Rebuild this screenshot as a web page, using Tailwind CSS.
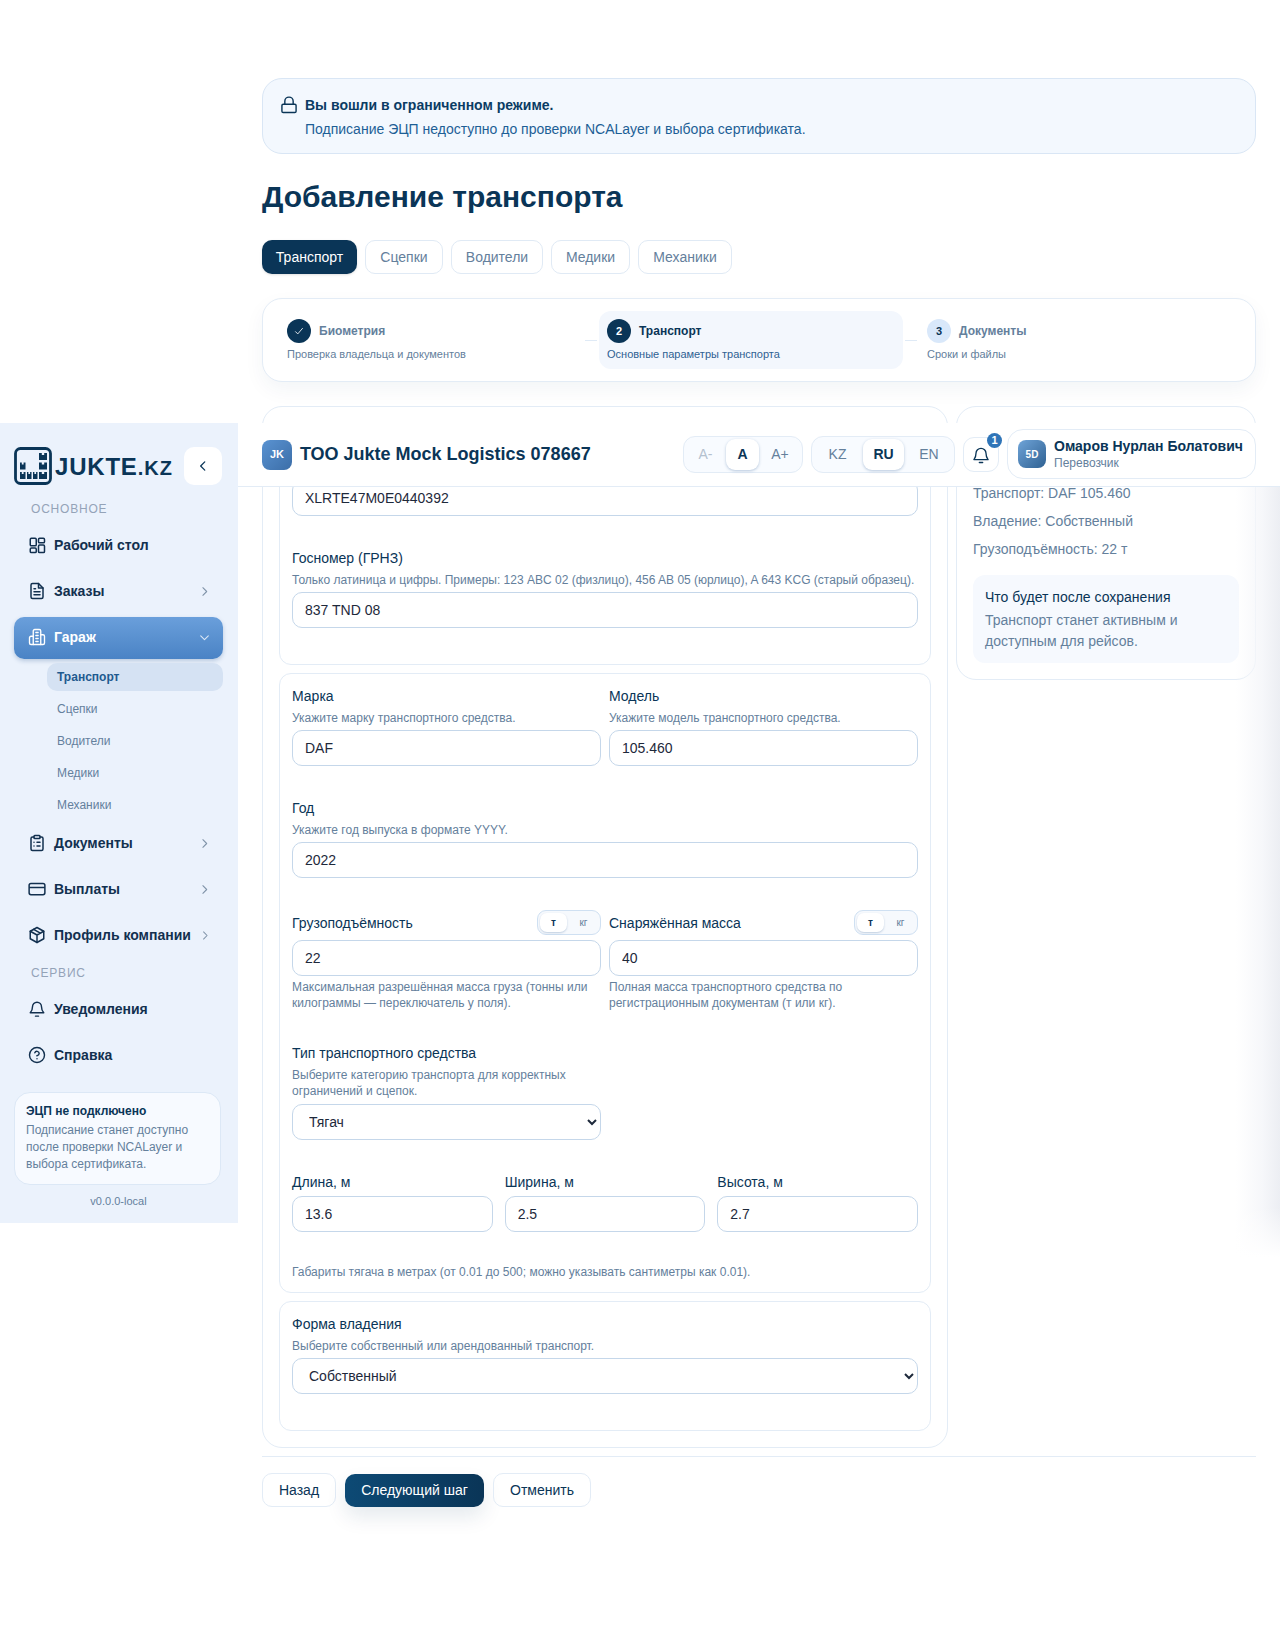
<!DOCTYPE html>
<html lang="ru">
  <head>
    <meta charset="UTF-8" />
    <title>Добавление транспорта</title>
    <script src="https://cdn.jsdelivr.net/npm/@tailwindcss/browser@4"></script>
  </head>
  <body class="relative h-[1627px] overflow-hidden bg-white font-['Liberation_Sans',Arial,sans-serif] text-[14px] text-[#0a3557]">
    <!-- page content -->
    <main class="pl-[262px] pr-[24px] pt-[78px]">
      <div class="flex h-[76px] gap-[6px] rounded-[20px] border border-[#d9e6f5] bg-[#f3f8fe] pl-[16px] pt-[14px]">
        <svg class="mt-[2px] h-[20px] w-[20px] text-[#0a3557]" viewBox="0 0 24 24" fill="none" stroke="currentColor" stroke-width="1.700" stroke-linecap="round" stroke-linejoin="round"><path d="M7 11V7.500a5 5 0 0 1 10 0V11"/><rect x="3.500" y="11" width="17" height="10" rx="1.500"/></svg>
        <div>
          <div class="h-[24px] font-bold leading-[24px] text-[#0b3c64]">Вы вошли в ограниченном режиме.</div>
          <div class="h-[24px] leading-[24px] text-[#1d5f96]">Подписание ЭЦП недоступно до проверки NCALayer и выбора сертификата.</div>
        </div>
      </div>

      <h1 class="mt-[24px] h-[38px] text-[30px] font-bold leading-[38px] text-[#0a3557]">Добавление транспорта</h1>

      <div class="mt-[24px] flex gap-[8px]">
        <button class="h-[34px] w-[95px] rounded-[10px] bg-[#0a3557] text-white shadow-sm">Транспорт</button>
        <button class="h-[34px] w-[78px] rounded-[10px] border border-[#e0eaf5] text-[#64809c]">Сцепки</button>
        <button class="h-[34px] w-[92px] rounded-[10px] border border-[#e0eaf5] text-[#64809c]">Водители</button>
        <button class="h-[34px] w-[79px] rounded-[10px] border border-[#e0eaf5] text-[#64809c]">Медики</button>
        <button class="h-[34px] w-[94px] rounded-[10px] border border-[#e0eaf5] text-[#64809c]">Механики</button>
      </div>

      <div class="mt-[24px] flex h-[84px] rounded-[20px] border border-[#e3ecf6] bg-white px-[16px] py-[12px] shadow-[0_8px_20px_rgba(15,50,90,0.05)]">
        <div class="w-[304px] p-[8px]">
          <div class="flex h-[24px] items-center gap-[8px]">
            <span class="flex h-[24px] w-[24px] items-center justify-center rounded-full bg-[#0a3557]">
              <svg class="h-[10px] w-[10px]" viewBox="0 0 12 12" fill="none" stroke="white" stroke-width="1"><path d="M1.500 6.500 4.500 9.500 10.500 2.500"/></svg>
            </span>
            <span class="text-[12px] font-bold text-[#64809c]">Биометрия</span>
          </div>
          <div class="mt-[3px] text-[11px] leading-[16px] text-[#64809c]">Проверка владельца и документов</div>
        </div>
        <div class="flex w-[16px] items-center"><div class="mx-[2px] h-px w-[12px] bg-[#dfeaf6]"></div></div>
        <div class="w-[304px] rounded-[12px] bg-[#f3f7fd] p-[8px]">
          <div class="flex h-[24px] items-center gap-[8px]">
            <span class="flex h-[24px] w-[24px] items-center justify-center rounded-full bg-[#0a3557] text-[11px] font-bold text-white">2</span>
            <span class="text-[12px] font-bold text-[#0a3557]">Транспорт</span>
          </div>
          <div class="mt-[3px] text-[11px] leading-[16px] text-[#2f6192]">Основные параметры транспорта</div>
        </div>
        <div class="flex w-[16px] items-center"><div class="mx-[2px] h-px w-[12px] bg-[#dfeaf6]"></div></div>
        <div class="flex-1 p-[8px]">
          <div class="flex h-[24px] items-center gap-[8px]">
            <span class="flex h-[24px] w-[24px] items-center justify-center rounded-full bg-[#d9e8fa] text-[11px] font-bold text-[#0a3557]">3</span>
            <span class="text-[12px] font-bold text-[#64809c]">Документы</span>
          </div>
          <div class="mt-[3px] text-[11px] leading-[16px] text-[#64809c]">Сроки и файлы</div>
        </div>
      </div>

      <div class="mt-[24px] flex gap-[8px]">
        <!-- form card -->
        <div class="h-[1042px] w-[686px] rounded-[20px] border border-[#e3ecf6] px-[16px] pt-[16px]">
          <section class="h-[242px] rounded-[12px] border border-[#e3ecf6] px-[12px] pt-[56px]">
            <input class="h-[36px] w-full rounded-[10px] border border-[#c5d7ea] bg-white pl-[12px] text-[14px] text-[#1e293b]" value="XLRTE47M0E0440392" />
            <div class="mt-[32px] h-[20px] leading-[20px] text-[#0a3557]">Госномер (ГРНЗ)</div>
            <div class="mt-[4px] h-[16px] whitespace-nowrap text-[12px] leading-[16px] text-[#64809c]">Только латиница и цифры. Примеры: 123 ABC 02 (физлицо), 456 AB 05 (юрлицо), A 643 KCG (старый образец).</div>
            <input class="mt-[4px] h-[36px] w-full rounded-[10px] border border-[#c5d7ea] bg-white pl-[12px] text-[14px] text-[#1e293b]" value="837 TND 08" />
          </section>

          <section class="mt-[8px] h-[620px] rounded-[12px] border border-[#e3ecf6] px-[12px] pt-[12px]">
            <div class="grid grid-cols-2 gap-[8px]">
              <div>
                <div class="h-[20px] leading-[20px]">Марка</div>
                <div class="mt-[4px] h-[16px] text-[12px] leading-[16px] text-[#64809c]">Укажите марку транспортного средства.</div>
                <input class="mt-[4px] h-[36px] w-full rounded-[10px] border border-[#c5d7ea] bg-white pl-[12px] text-[14px] text-[#1e293b]" value="DAF" />
              </div>
              <div>
                <div class="h-[20px] leading-[20px]">Модель</div>
                <div class="mt-[4px] h-[16px] text-[12px] leading-[16px] text-[#64809c]">Укажите модель транспортного средства.</div>
                <input class="mt-[4px] h-[36px] w-full rounded-[10px] border border-[#c5d7ea] bg-white pl-[12px] text-[14px] text-[#1e293b]" value="105.460" />
              </div>
            </div>

            <div class="mt-[32px] h-[20px] leading-[20px]">Год</div>
            <div class="mt-[4px] h-[16px] text-[12px] leading-[16px] text-[#64809c]">Укажите год выпуска в формате YYYY.</div>
            <input class="mt-[4px] h-[36px] w-full rounded-[10px] border border-[#c5d7ea] bg-white pl-[12px] text-[14px] text-[#1e293b]" value="2022" />

            <div class="mt-[32px] grid grid-cols-2 gap-[8px]">
              <div>
                <div class="flex h-[25px] items-center justify-between">
                  <span class="pt-[1px]">Грузоподъёмность</span>
                  <span class="flex h-[25px] w-[64px] rounded-[9px] border border-[#cfe0f2] bg-[#f6f9fd] p-[2px] text-[10px] text-[#64809c]">
                    <span class="flex w-[27px] items-center justify-center rounded-[7px] bg-white font-bold text-[#0a3557] shadow-[0_1px_2px_rgba(30,80,140,0.25)]">т</span>
                    <span class="flex flex-1 items-center justify-center pl-[2px]">кг</span>
                  </span>
                </div>
                <input class="mt-[5px] h-[36px] w-full rounded-[10px] border border-[#c5d7ea] bg-white pl-[12px] text-[14px] text-[#1e293b]" value="22" />
                <div class="mt-[3px] text-[12px] leading-[16px] text-[#64809c]">Максимальная разрешённая масса груза (тонны или килограммы — переключатель у поля).</div>
              </div>
              <div>
                <div class="flex h-[25px] items-center justify-between">
                  <span class="pt-[1px]">Снаряжённая масса</span>
                  <span class="flex h-[25px] w-[64px] rounded-[9px] border border-[#cfe0f2] bg-[#f6f9fd] p-[2px] text-[10px] text-[#64809c]">
                    <span class="flex w-[27px] items-center justify-center rounded-[7px] bg-white font-bold text-[#0a3557] shadow-[0_1px_2px_rgba(30,80,140,0.25)]">т</span>
                    <span class="flex flex-1 items-center justify-center pl-[2px]">кг</span>
                  </span>
                </div>
                <input class="mt-[5px] h-[36px] w-full rounded-[10px] border border-[#c5d7ea] bg-white pl-[12px] text-[14px] text-[#1e293b]" value="40" />
                <div class="mt-[3px] text-[12px] leading-[16px] text-[#64809c]">Полная масса транспортного средства по регистрационным документам (т или кг).</div>
              </div>
            </div>

            <div class="mt-[32px] w-[309px]">
              <div class="h-[20px] leading-[20px]">Тип транспортного средства</div>
              <div class="mt-[4px] text-[12px] leading-[16px] text-[#64809c]">Выберите категорию транспорта для корректных ограничений и сцепок.</div>
              <select class="mt-[5px] h-[36px] w-full rounded-[10px] border border-[#c5d7ea] bg-white pl-[12px] text-[14px] text-[#1e293b]"><option>Тягач</option></select>
            </div>

            <div class="mt-[32px] grid grid-cols-3 gap-[12px]">
              <div>
                <div class="h-[20px] leading-[20px]">Длина, м</div>
                <input class="mt-[4px] h-[36px] w-full rounded-[10px] border border-[#c5d7ea] bg-white pl-[12px] text-[14px] text-[#1e293b]" value="13.6" />
              </div>
              <div>
                <div class="h-[20px] leading-[20px]">Ширина, м</div>
                <input class="mt-[4px] h-[36px] w-full rounded-[10px] border border-[#c5d7ea] bg-white pl-[12px] text-[14px] text-[#1e293b]" value="2.5" />
              </div>
              <div>
                <div class="h-[20px] leading-[20px]">Высота, м</div>
                <input class="mt-[4px] h-[36px] w-full rounded-[10px] border border-[#c5d7ea] bg-white pl-[12px] text-[14px] text-[#1e293b]" value="2.7" />
              </div>
            </div>
            <div class="mt-[32px] h-[16px] text-[12px] leading-[16px] text-[#64809c]">Габариты тягача в метрах (от 0.01 до 500; можно указывать сантиметры как 0.01).</div>
          </section>

          <section class="mt-[8px] h-[130px] rounded-[12px] border border-[#e3ecf6] px-[12px] pt-[12px]">
            <div class="h-[20px] leading-[20px]">Форма владения</div>
            <div class="mt-[4px] h-[16px] text-[12px] leading-[16px] text-[#64809c]">Выберите собственный или арендованный транспорт.</div>
            <select class="mt-[4px] h-[36px] w-full rounded-[10px] border border-[#c5d7ea] bg-white pl-[12px] text-[14px] text-[#1e293b]"><option>Собственный</option></select>
          </section>
        </div>

        <!-- summary card -->
        <div class="h-[274px] flex-1 rounded-[20px] border border-[#e3ecf6] px-[16px] pt-[72px]">
          <div class="h-[28px] leading-[28px] text-[#64809c]">Транспорт: DAF 105.460</div>
          <div class="h-[28px] leading-[28px] text-[#64809c]">Владение: Собственный</div>
          <div class="h-[28px] leading-[28px] text-[#64809c]">Грузоподъёмность: 22 т</div>
          <div class="mt-[12px] h-[88px] rounded-[12px] bg-[#f6f9fe] px-[12px] pt-[12px]">
            <div class="h-[20px] leading-[20px] text-[#0a3557]">Что будет после сохранения</div>
            <div class="mt-[3px] leading-[21px] text-[#64809c]">Транспорт станет активным и доступным для рейсов.</div>
          </div>
        </div>
      </div>

      <div class="mt-[8px] border-t border-[#e3ecf6] pt-[16px]">
        <div class="flex items-center gap-[9px]">
          <button class="h-[34px] w-[74px] rounded-[10px] border border-[#e3ecf6] text-[#0a3557]">Назад</button>
          <button class="h-[33px] w-[139px] rounded-[10px] bg-gradient-to-r from-[#0d4a75] to-[#0a3557] text-white shadow-[0_10px_20px_rgba(10,53,87,0.1)]">Следующий шаг</button>
          <button class="h-[34px] w-[98px] rounded-[10px] border border-[#e3ecf6] text-[#0a3557]">Отменить</button>
        </div>
      </div>
    </main>

    <!-- soft shade along the right edge -->
    <div class="absolute right-0 top-[487px] h-[770px] w-[44px] bg-gradient-to-l from-[#eceef3] via-[#f6f7fa] via-40% to-white/0">
      <div class="absolute bottom-0 left-0 h-[50px] w-full bg-gradient-to-b from-white/0 to-white"></div>
    </div>

    <!-- sticky header, photographed mid-scroll -->
    <header class="absolute left-[238px] right-0 top-[423px] flex h-[64px] items-center justify-between border-b border-[#e3ecf6] bg-white pl-[24px] pr-[24px]">
      <div class="flex items-center gap-[8px]">
        <span class="flex h-[30px] w-[30px] items-center justify-center rounded-[8px] bg-gradient-to-br from-[#5a93d2] to-[#3c6ea8] text-[11px] font-bold text-white">JK</span>
        <span class="text-[18px] font-bold text-[#0a3557]">ТОО Jukte Mock Logistics 078667</span>
      </div>
      <div class="flex items-center gap-[8px]">
        <div class="flex h-[37px] w-[120px] items-center rounded-[12px] border border-[#e3ecf6] bg-[#f8fbff] px-[4px] text-[#64809c]">
          <span class="w-[38px] pr-[3px] text-center text-[#b4c1cf]">A-</span>
          <span class="flex h-[31px] w-[33px] items-center justify-center rounded-[9px] bg-white font-bold text-[#0a3557] shadow-[0_1px_3px_rgba(30,80,140,0.3)]">A</span>
          <span class="flex-1 pl-[3px] text-center">A+</span>
        </div>
        <div class="flex h-[37px] w-[144px] items-center rounded-[12px] border border-[#e3ecf6] bg-[#f8fbff] px-[4px] text-[#64809c]">
          <span class="w-[47px] pr-[4px] text-center">KZ</span>
          <span class="flex h-[31px] w-[41px] items-center justify-center rounded-[9px] bg-white font-bold text-[#0a3557] shadow-[0_1px_3px_rgba(30,80,140,0.3)]">RU</span>
          <span class="flex-1 pl-[4px] text-center">EN</span>
        </div>
        <div class="relative flex h-[35px] w-[36px] items-center justify-center rounded-[11px] border border-[#e3ecf6] bg-white">
          <svg class="h-[20px] w-[20px]" viewBox="0 0 24 24" fill="none" stroke="#0a3557" stroke-width="1.600" stroke-linecap="round" stroke-linejoin="round"><path d="M6 10a6 6 0 0 1 12 0c0 4.500 1.500 6 2.500 7.500h-17C4.500 16 6 14.500 6 10Z"/><path d="M10 21h4"/></svg>
          <span class="absolute -top-[5px] right-[-4px] flex h-[15px] w-[15px] items-center justify-center rounded-full bg-[#2f75b8] text-[11px] font-bold text-white">1</span>
        </div>
        <div class="-mt-[1px] flex h-[50px] w-[249px] items-center gap-[8px] rounded-[16px] border border-[#e3ecf6] bg-white pl-[10px]">
          <span class="flex h-[28px] w-[28px] items-center justify-center rounded-[8px] bg-gradient-to-br from-[#6fa4d8] to-[#2f6192] text-[10px] font-bold text-white">5D</span>
          <div>
            <div class="text-[14px] font-bold leading-[17px] text-[#0a3557]">Омаров Нурлан Болатович</div>
            <div class="text-[12px] leading-[16px] text-[#64809c]">Перевозчик</div>
          </div>
        </div>
      </div>
    </header>

    <!-- sidebar -->
    <aside class="absolute left-0 top-[423px] h-[800px] w-[238px] bg-[#ebf2fc] pl-[14px] pr-[15px] pt-[24px]">
      <div class="flex h-[38px] items-center justify-between">
        <div class="flex items-center gap-[3px]">
          <svg class="h-[38px] w-[38px]" viewBox="0 0 38 38" fill="#0a3557">
            <rect x="1.500" y="1.500" width="35" height="35" rx="5" fill="none" stroke="#0a3557" stroke-width="2.800"/>
            <path d="M6 15.500h1.800v2h1.800v-2h1.900v7H6Z"/>
            <path d="M6 25h1.800v2h1.800v-2h1.900v7H6Z"/>
            <path d="M13 25h1.400v2h1.700v-2h1.400v7H13Z"/>
            <path d="M19 25h1.400v2h1.700v-2h1.400v7H19Z"/>
            <path d="M25 25h2.800v2h2.400v-2H33v7h-8Z"/>
            <path d="M25 15.500h2.800v2h2.400v-2H33v7h-8Z"/>
            <path d="M25 6h2.800v2h2.400V6H33v7h-8Z"/>
          </svg>
          <span class="mt-[2px] text-[24px] font-bold leading-none tracking-[0.8px] text-[#0a3557]">JUKTE<span class="text-[20px] tracking-[1px]">.KZ</span></span>
        </div>
        <button class="mr-[1px] flex h-[38px] w-[38px] items-center justify-center rounded-[10px] bg-white">
          <svg class="h-[14px] w-[14px]" viewBox="0 0 24 24" fill="none" stroke="#0a3557" stroke-width="2.200" stroke-linecap="round" stroke-linejoin="round"><path d="m15 5-7 7 7 7"/></svg>
        </button>
      </div>

      <div class="mt-[16px] h-[16px] pl-[17px] text-[12px] leading-[16px] tracking-[0.8px] text-[#94a3b8]">ОСНОВНОЕ</div>

      <nav class="mt-[7px] flex flex-col text-[#12304f]">
        <a class="flex h-[42px] items-center gap-[8px] pl-[14px] font-bold">
          <svg class="h-[18px] w-[18px] shrink-0" viewBox="0 0 24 24" fill="none" stroke="currentColor" stroke-width="2"><rect x="3" y="3" width="8" height="10" rx="1.500"/><rect x="14" y="3" width="8" height="6" rx="1.500"/><rect x="14" y="12" width="8" height="10" rx="1.500"/><rect x="3" y="16" width="8" height="6" rx="1.500"/></svg>
          <span>Рабочий стол</span>
        </a>
        <a class="mt-[4px] flex h-[42px] items-center gap-[8px] pl-[14px] pr-[12px] font-bold">
          <svg class="h-[18px] w-[18px] shrink-0" viewBox="0 0 24 24" fill="none" stroke="currentColor" stroke-width="2" stroke-linejoin="round" stroke-linecap="round"><path d="M14 2H6a2 2 0 0 0-2 2v16a2 2 0 0 0 2 2h12a2 2 0 0 0 2-2V8Z"/><path d="M14 2v6h6"/><path d="M8 13h8M8 17h8M8 9h2"/></svg>
          <span class="flex-1">Заказы</span>
          <svg class="h-[13px] w-[13px]" viewBox="0 0 24 24" fill="none" stroke="#7f93a8" stroke-width="2" stroke-linecap="round" stroke-linejoin="round"><path d="m9 5 7 7-7 7"/></svg>
        </a>
        <a class="mt-[5px] flex h-[42px] items-center gap-[8px] rounded-[10px] bg-gradient-to-b from-[#6a9fdb] to-[#4a83c5] pb-[2px] pl-[14px] pr-[12px] font-bold text-white shadow-[0_2px_4px_rgba(30,80,140,0.25)]">
          <svg class="h-[18px] w-[18px] shrink-0" viewBox="0 0 24 24" fill="none" stroke="currentColor" stroke-width="1.800" stroke-linejoin="round" stroke-linecap="round"><path d="M7 22V4a2 2 0 0 1 2-2h6a2 2 0 0 1 2 2v18Z"/><path d="M7 11H4a2 2 0 0 0-2 2v7a2 2 0 0 0 2 2h3M17 9h3a2 2 0 0 1 2 2v9a2 2 0 0 1-2 2h-3"/><path d="M10.500 6h3M10.500 10h3M10.500 14h3M10.500 18h3"/></svg>
          <span class="flex-1">Гараж</span>
          <svg class="h-[13px] w-[13px]" viewBox="0 0 24 24" fill="none" stroke="#dbe8f6" stroke-width="2" stroke-linecap="round" stroke-linejoin="round"><path d="m5 9 7 7 7-7"/></svg>
        </a>
        <div class="ml-[33px] mt-[4px] flex flex-col text-[12px] text-[#64809c]">
          <a class="flex h-[28px] items-center rounded-[10px] bg-[#d5e2f3] pl-[10px] font-bold text-[#1f5a8f]">Транспорт</a>
          <a class="mt-[4px] flex h-[28px] items-center pl-[10px]">Сцепки</a>
          <a class="mt-[4px] flex h-[28px] items-center pl-[10px]">Водители</a>
          <a class="mt-[4px] flex h-[28px] items-center pl-[10px]">Медики</a>
          <a class="mt-[4px] flex h-[28px] items-center pl-[10px]">Механики</a>
        </div>
        <a class="mt-[3px] flex h-[42px] items-center gap-[8px] pl-[14px] pr-[12px] font-bold">
          <svg class="h-[18px] w-[18px] shrink-0" viewBox="0 0 24 24" fill="none" stroke="currentColor" stroke-width="2" stroke-linejoin="round" stroke-linecap="round"><rect x="8" y="2" width="8" height="4" rx="1"/><path d="M16 4h2a2 2 0 0 1 2 2v14a2 2 0 0 1-2 2H6a2 2 0 0 1-2-2V6a2 2 0 0 1 2-2h2"/><path d="M8 11h.01M8 16h.01M12 11h4M12 16h4"/></svg>
          <span class="flex-1">Документы</span>
          <svg class="h-[13px] w-[13px]" viewBox="0 0 24 24" fill="none" stroke="#7f93a8" stroke-width="2" stroke-linecap="round" stroke-linejoin="round"><path d="m9 5 7 7-7 7"/></svg>
        </a>
        <a class="mt-[4px] flex h-[42px] items-center gap-[8px] pl-[14px] pr-[12px] font-bold">
          <svg class="h-[18px] w-[18px] shrink-0" viewBox="0 0 24 24" fill="none" stroke="currentColor" stroke-width="2" stroke-linejoin="round"><rect x="1.500" y="4.500" width="21" height="15" rx="2.500"/><path d="M1.500 10h21"/></svg>
          <span class="flex-1">Выплаты</span>
          <svg class="h-[13px] w-[13px]" viewBox="0 0 24 24" fill="none" stroke="#7f93a8" stroke-width="2" stroke-linecap="round" stroke-linejoin="round"><path d="m9 5 7 7-7 7"/></svg>
        </a>
        <a class="mt-[4px] flex h-[42px] items-center gap-[8px] pl-[14px] pr-[12px] font-bold">
          <svg class="h-[18px] w-[18px] shrink-0" viewBox="0 0 24 24" fill="none" stroke="currentColor" stroke-width="2" stroke-linejoin="round" stroke-linecap="round"><path d="M12 2 3 7v10l9 5 9-5V7Z"/><path d="m3 7 9 5 9-5M12 12v10M7.500 4.500l9 5"/></svg>
          <span class="flex-1 whitespace-nowrap">Профиль компании</span>
          <svg class="h-[13px] w-[13px]" viewBox="0 0 24 24" fill="none" stroke="#7f93a8" stroke-width="2" stroke-linecap="round" stroke-linejoin="round"><path d="m9 5 7 7-7 7"/></svg>
        </a>
        <div class="mt-[9px] h-[16px] pl-[17px] text-[12px] font-normal leading-[16px] tracking-[0.8px] text-[#94a3b8]">СЕРВИС</div>
        <a class="mt-[7px] flex h-[42px] items-center gap-[8px] pl-[14px] font-bold">
          <svg class="h-[18px] w-[18px] shrink-0" viewBox="0 0 24 24" fill="none" stroke="currentColor" stroke-width="1.900" stroke-linecap="round" stroke-linejoin="round"><path d="M6 9a6 6 0 0 1 12 0c0 5 2 7 3 8H3c1-1 3-3 3-8Z"/><path d="M10 21.500h4"/></svg>
          <span>Уведомления</span>
        </a>
        <a class="mt-[4px] flex h-[42px] items-center gap-[8px] pl-[14px] font-bold">
          <svg class="h-[18px] w-[18px] shrink-0" viewBox="0 0 24 24" fill="none" stroke="currentColor" stroke-width="1.900" stroke-linecap="round" stroke-linejoin="round"><circle cx="12" cy="12" r="10"/><path d="M9.100 9a3 3 0 0 1 5.800 1c0 2-3 3-3 3"/><path d="M12 17h.01"/></svg>
          <span>Справка</span>
        </a>
      </nav>

      <div class="mt-[16px] h-[93px] w-[207px] rounded-[16px] border border-[#dce8f6] bg-[#f7faff] pl-[11px] pt-[10px]">
        <div class="text-[12px] font-bold leading-[16px] text-[#0a3557]">ЭЦП не подключено</div>
        <div class="mt-[3px] text-[12px] leading-[17px] text-[#64809c]">Подписание станет доступно<br />после проверки NCALayer и<br />выбора сертификата.</div>
      </div>
      <div class="mt-[8px] text-center text-[11px] leading-[16px] text-[#64809c]">v0.0.0-local</div>
    </aside>
  </body>
</html>
